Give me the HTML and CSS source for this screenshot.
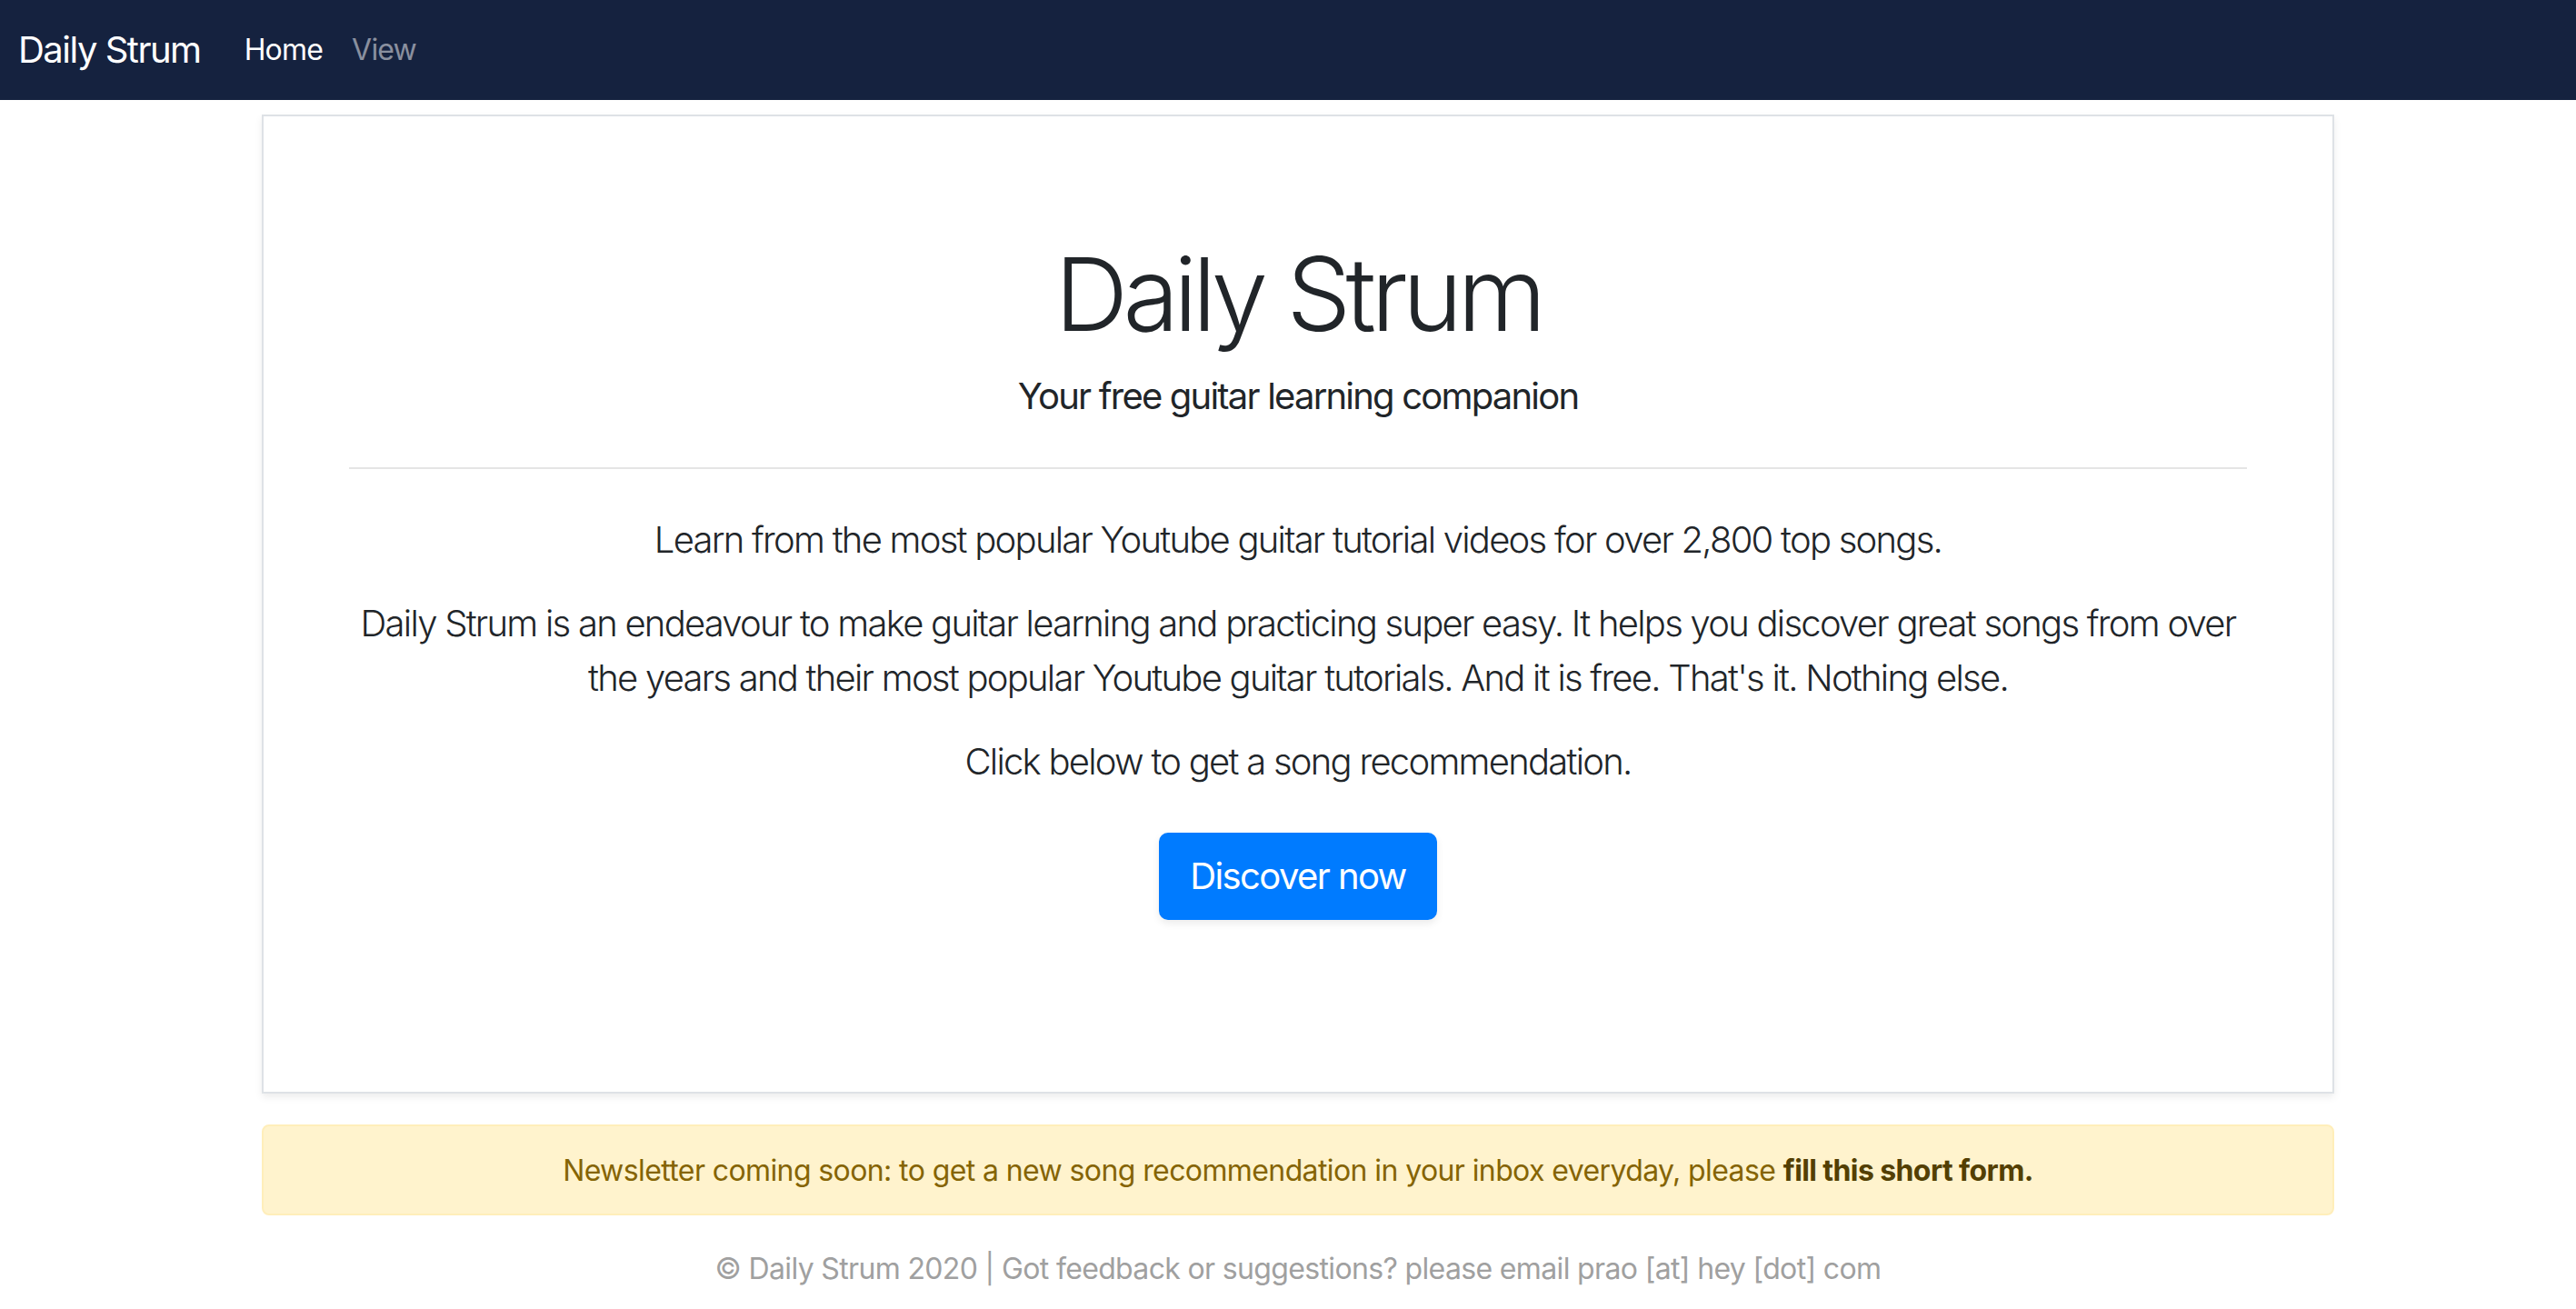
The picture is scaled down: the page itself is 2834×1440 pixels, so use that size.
FILE: index.html
```html
<!DOCTYPE html>
<html lang="en">
<head>
<meta charset="utf-8">
<title>Daily Strum</title>
<link rel="stylesheet" href="styles.css">
</head>
<body>
<nav class="navbar">
  <a class="brand" href="#">Daily Strum</a>
  <a class="nav-link active" href="#">Home</a>
  <a class="nav-link" href="#">View</a>
</nav>
<main class="container">
  <section class="card">
    <h1 class="title">Daily Strum</h1>
    <p class="subtitle">Your free guitar learning companion</p>
    <hr class="divider">
    <p class="lead">Learn from the most popular Youtube guitar tutorial videos for over 2,800 top songs.</p>
    <p class="lead">Daily Strum is an endeavour to make guitar learning and practicing super easy. It helps you discover great songs from over the years and their most popular Youtube guitar tutorials. And it is free. That's it. Nothing else.</p>
    <p class="lead">Click below to get a song recommendation.</p>
    <a class="btn" href="#">Discover now</a>
  </section>
  <div class="alert">Newsletter coming soon: to get a new song recommendation in your inbox everyday, please <a class="alert-link" href="#">fill this short form.</a></div>
  <footer class="footer">© Daily Strum 2020 | Got feedback or suggestions? please email prao [at] hey [dot] com</footer>
</main>
</body>
</html>
```
FILE: styles.css
```css
* { box-sizing: border-box; }
html, body { margin: 0; padding: 0; }
body {
  font-family: Inter, "Liberation Sans", sans-serif;
  color: #212529;
  background: #fff;
}
a { text-decoration: none; }

.navbar {
  height: 110px;
  background: #15223f;
  display: flex;
  align-items: center;
  padding: 0 20px;
}
.brand {
  font-size: 40px;
  letter-spacing: -1.5px;
  color: #fff;
  margin-right: 32px;
  line-height: 60px;
}
.nav-link {
  font-size: 32px;
  letter-spacing: -0.8px;
  line-height: 48px;
  padding: 0 16px;
  color: rgba(255,255,255,.5);
}
.nav-link.active { color: #fff; }

.container {
  width: 2280px;
  margin-left: 288px;
}
.card {
  margin-top: 16px;
  border: 2px solid #dee2e6;
  box-shadow: 0 4px 8px rgba(0,0,0,.075);
  padding: 128px 94px 189px;
  display: flex;
  flex-direction: column;
  align-items: center;
  text-align: center;
}
.title {
  margin: 0 0 16px;
  font-size: 112px;
  font-weight: 300;
  letter-spacing: -5.6px;
  line-height: 1.2;
}
.subtitle {
  margin: 0 0 48px;
  font-size: 40px;
  letter-spacing: -1.8px;
  line-height: 60px;
  font-weight: 400;
}
.divider {
  align-self: stretch;
  margin: 0 0 48px;
  border: 0;
  border-top: 2px solid rgba(0,0,0,.1);
}
.lead {
  margin: 0 0 32px;
  font-size: 40px;
  letter-spacing: -1.75px;
  line-height: 60px;
  font-weight: 300;
}
.btn {
  margin-top: 16px;
  display: inline-block;
  font-size: 40px;
  letter-spacing: -1.6px;
  line-height: 60px;
  padding: 16px 32px;
  border: 2px solid #007bff;
  border-radius: 10px;
  background: #007bff;
  color: #fff;
  box-shadow: 0 4px 8px rgba(0,0,0,.08);
}
.alert {
  margin-top: 34px;
  padding: 25px 40px 23px;
  border: 2px solid #ffeeba;
  border-radius: 8px;
  background: #fff3cd;
  color: #856404;
  font-size: 32px;
  letter-spacing: -0.6px;
  line-height: 48px;
  text-align: center;
}
.alert-link {
  color: #533f03;
  font-weight: 700;
}
.footer {
  margin-top: 35px;
  font-size: 32px;
  letter-spacing: -0.65px;
  line-height: 48px;
  color: #a0a0a0;
  text-align: center;
}
```
